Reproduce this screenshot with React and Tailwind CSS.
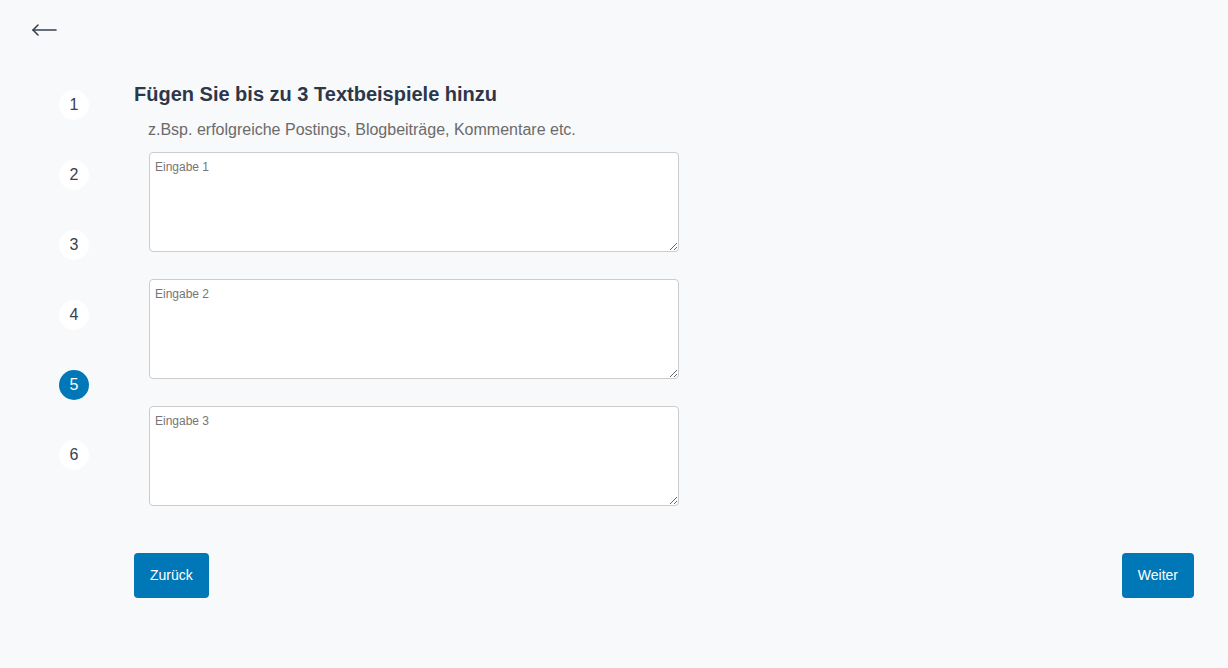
import React from "react";

export default function App() {
  const steps = [1, 2, 3, 4, 5, 6];
  return (
    <div className="min-h-[668px] bg-[#f8f9fa] font-['Liberation_Sans',Arial,sans-serif]">
      <div className="h-[60px] flex items-center pl-[31px]">
        <svg width="26" height="14" viewBox="0 0 26 14" fill="none" stroke="#374151" strokeWidth="1.6" strokeLinecap="round" strokeLinejoin="round">
          <path d="M2 7H25" />
          <path d="M7 2L2 7L7 12" />
        </svg>
      </div>
      <div className="flex pt-[20px]">
        <div className="w-[134px] pl-[59px] pt-[10px] flex flex-col gap-[40px]">
          {steps.map((s) => (
            <div
              key={s}
              className={
                s === 5
                  ? "w-[30px] h-[30px] rounded-full bg-[#0077b6] text-white flex items-center justify-center text-[16px]"
                  : "w-[30px] h-[30px] rounded-full bg-white text-[#374151] flex items-center justify-center text-[16px]"
              }
            >
              {s}
            </div>
          ))}
        </div>
        <div className="flex-1 pr-[34px] flex flex-col">
          <h1 className="text-[20px] leading-[28px] font-bold text-[#2d3748]">
            Fügen Sie bis zu 3 Textbeispiele hinzu
          </h1>
          <p className="mt-[10px] ml-[14px] text-[16px] leading-[24px] text-[#6b6b6b]">
            z.Bsp. erfolgreiche Postings, Blogbeiträge, Kommentare etc.
          </p>
          <div className="mt-[10px] ml-[15px] flex flex-col gap-[27px]">
            {[1, 2, 3].map((n) => (
              <textarea
                key={n}
                placeholder={`Eingabe ${n}`}
                className="w-[530px] h-[100px] bg-white border border-[#cccccc] rounded-[4px] px-[5px] pt-[6px] pb-[4px] text-[12px] leading-[16px] text-[#333] placeholder:text-[#757575] outline-none resize-y"
              />
            ))}
          </div>
          <div className="mt-[47px] flex justify-between">
            <button className="h-[45px] px-[16px] rounded-[4px] bg-[#0077b6] text-white text-[14px]">
              Zurück
            </button>
            <button className="h-[45px] px-[16px] rounded-[4px] bg-[#0077b6] text-white text-[14px]">
              Weiter
            </button>
          </div>
        </div>
      </div>
    </div>
  );
}
